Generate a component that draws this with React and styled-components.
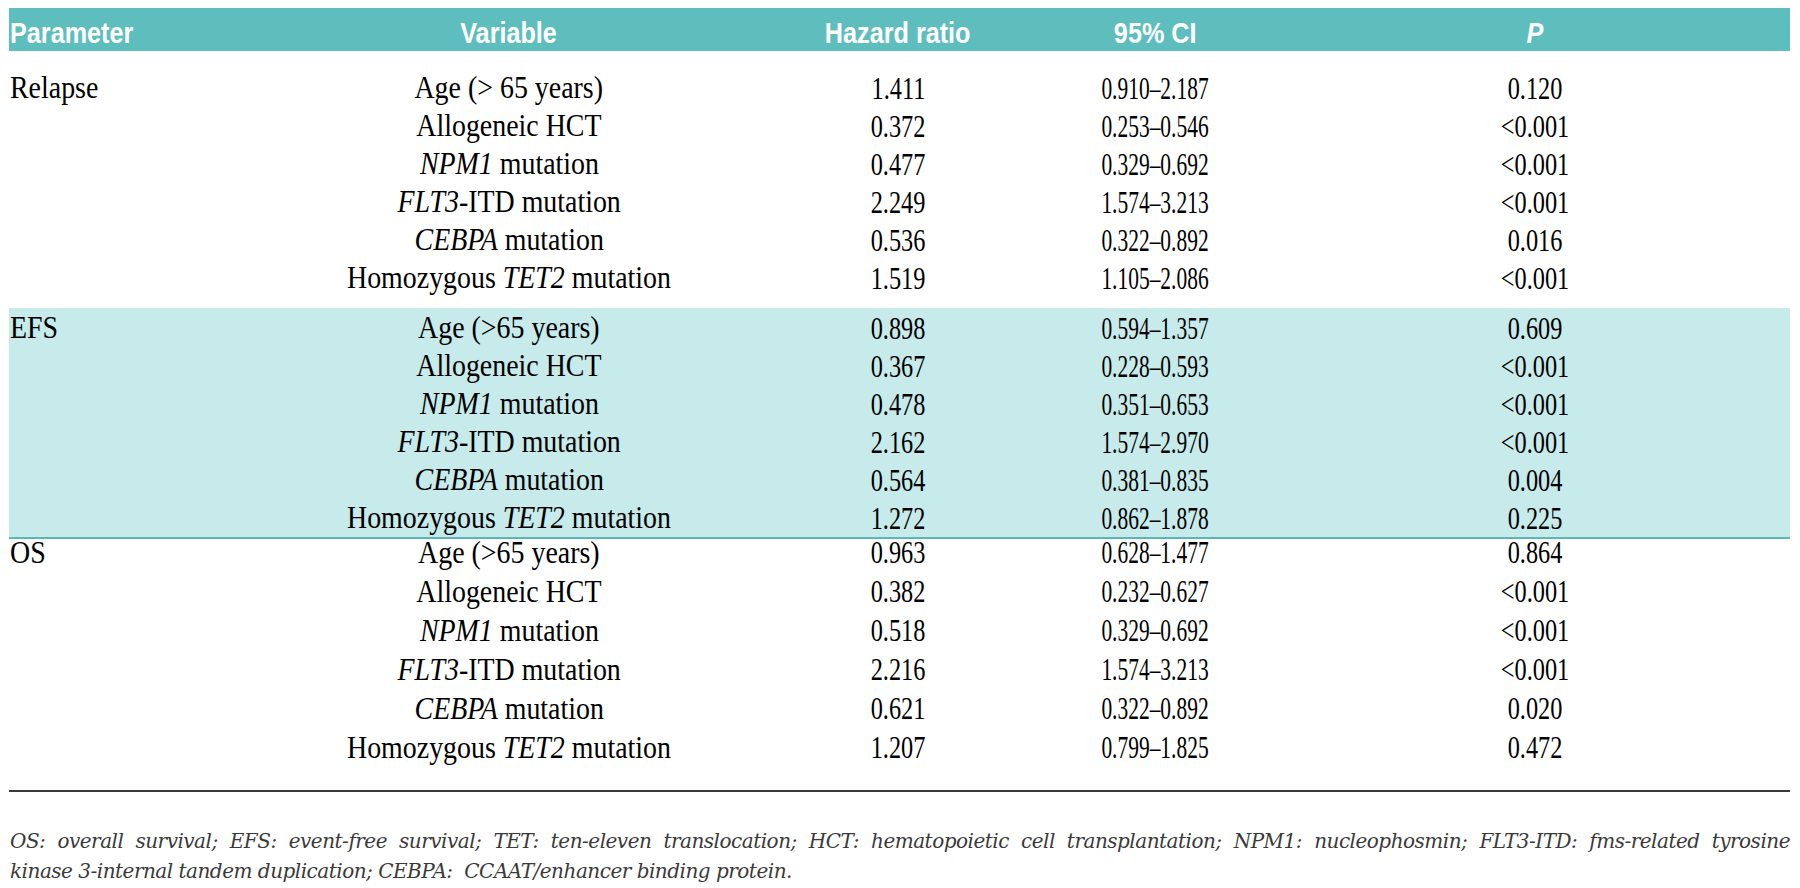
import styled, { createGlobalStyle } from "styled-components";

const GlobalStyle = createGlobalStyle`
  body {
    margin: 0;
    background: #ffffff;
  }
`;

const cols = "243px 514px 264px 250px 510px";

const Page = styled.div`
  width: 1781px;
  padding: 8px 0 0 9px;
`;

const HeaderRow = styled.div`
  display: grid;
  grid-template-columns: ${cols};
  align-items: center;
  height: 43px;
  background: #5ebebe;
  color: #ffffff;
  font-family: "Liberation Sans", Arial, sans-serif;
  font-weight: 700;
  font-size: 30px;
  line-height: 43px;
  white-space: nowrap;
`;

const HeadCell = styled.div`
  text-align: ${(p) => (p.$left ? "left" : "center")};
  padding-left: ${(p) => (p.$left ? "1px" : "0")};
  padding-top: 3px;
`;

const HeadLabel = styled.span`
  display: inline-block;
  transform: scaleX(0.84);
  transform-origin: ${(p) => (p.$left ? "left" : "center")} center;
  font-style: ${(p) => (p.$italic ? "italic" : "normal")};
`;

const Group = styled.div`
  background: ${(p) => (p.$band ? "#c7eaea" : "transparent")};
  padding: ${(p) => p.$pad};
  margin-top: ${(p) => p.$pull || "0"};
  border-bottom: ${(p) => (p.$line ? "2px solid #5ab7b7" : "none")};
`;

const Row = styled.div`
  display: grid;
  grid-template-columns: ${cols};
  height: ${(p) => p.$h}px;
  line-height: ${(p) => p.$h}px;
  font-family: "Liberation Serif", "Times New Roman", serif;
  color: #000000;
  white-space: nowrap;
`;

const Cell = styled.div`
  text-align: ${(p) => (p.$left ? "left" : "center")};
  padding-left: ${(p) => (p.$left ? "1px" : "0")};
`;

const Label = styled.span`
  display: inline-block;
  font-size: 31px;
  transform: scaleX(0.9);
  transform-origin: ${(p) => (p.$left ? "left" : "center")} center;
`;

const Num = styled.span`
  display: inline-block;
  font-size: 32px;
  transform: scaleX(${(p) => p.$squeeze || 0.76});
  transform-origin: center center;
`;

const Rule = styled.div`
  margin-top: 23px;
  height: 2px;
  background: #3a3a3a;
`;

const Footnote = styled.div`
  margin-top: 34px;
  padding-left: 1px;
  font-family: "DejaVu Serif", "Liberation Serif", serif;
  font-style: italic;
  font-size: 20px;
  letter-spacing: -0.5px;
  line-height: 30px;
  color: #3a3a3a;
`;

const FootLine = styled.div`
  text-align: ${(p) => (p.$justify ? "justify" : "left")};
  text-align-last: ${(p) => (p.$justify ? "justify" : "left")};
  white-space: ${(p) => (p.$justify ? "normal" : "pre")};
`;

const variables = [
  ["Age", null, " (>65 years)"],
  ["Allogeneic HCT", null, ""],
  ["", "NPM1", " mutation"],
  ["", "FLT3", "-ITD mutation"],
  ["", "CEBPA", " mutation"],
  ["Homozygous ", "TET2", " mutation"],
];

const groups = [
  {
    name: "Relapse",
    first: "Age (> 65 years)",
    rows: [
      ["1.411", "0.910–2.187", "0.120"],
      ["0.372", "0.253–0.546", "<0.001"],
      ["0.477", "0.329–0.692", "<0.001"],
      ["2.249", "1.574–3.213", "<0.001"],
      ["0.536", "0.322–0.892", "0.016"],
      ["1.519", "1.105–2.086", "<0.001"],
    ],
    h: 38,
    pad: "18px 0 11px 0",
  },
  {
    name: "EFS",
    band: true,
    line: true,
    rows: [
      ["0.898", "0.594–1.357", "0.609"],
      ["0.367", "0.228–0.593", "<0.001"],
      ["0.478", "0.351–0.653", "<0.001"],
      ["2.162", "1.574–2.970", "<0.001"],
      ["0.564", "0.381–0.835", "0.004"],
      ["1.272", "0.862–1.878", "0.225"],
    ],
    h: 38,
    pad: "1px 0 0 0",
  },
  {
    name: "OS",
    pull: "-6px",
    rows: [
      ["0.963", "0.628–1.477", "0.864"],
      ["0.382", "0.232–0.627", "<0.001"],
      ["0.518", "0.329–0.692", "<0.001"],
      ["2.216", "1.574–3.213", "<0.001"],
      ["0.621", "0.322–0.892", "0.020"],
      ["1.207", "0.799–1.825", "0.472"],
    ],
    h: 39,
    pad: "0",
  },
];

function VariableText({ index, first }) {
  if (index === 0 && first) return <Label>{first}</Label>;
  const [pre, it, post] = variables[index];
  return (
    <Label>
      {pre}
      {it && <i>{it}</i>}
      {post}
    </Label>
  );
}

function App() {
  return (
    <Page>
      <GlobalStyle />
      <HeaderRow>
        <HeadCell $left>
          <HeadLabel $left>Parameter</HeadLabel>
        </HeadCell>
        <HeadCell>
          <HeadLabel>Variable</HeadLabel>
        </HeadCell>
        <HeadCell>
          <HeadLabel>Hazard ratio</HeadLabel>
        </HeadCell>
        <HeadCell>
          <HeadLabel>95% CI</HeadLabel>
        </HeadCell>
        <HeadCell>
          <HeadLabel $italic>P</HeadLabel>
        </HeadCell>
      </HeaderRow>

      {groups.map((g) => (
        <Group key={g.name} $band={g.band} $line={g.line} $pad={g.pad} $pull={g.pull}>
          {g.rows.map((r, i) => (
            <Row key={i} $h={g.h}>
              <Cell $left>{i === 0 && <Label $left>{g.name}</Label>}</Cell>
              <Cell>
                <VariableText index={i} first={g.first} />
              </Cell>
              <Cell>
                <Num>{r[0]}</Num>
              </Cell>
              <Cell>
                <Num $squeeze={0.67}>{r[1]}</Num>
              </Cell>
              <Cell>
                <Num>{r[2]}</Num>
              </Cell>
            </Row>
          ))}
        </Group>
      ))}

      <Rule />

      <Footnote>
        <FootLine $justify>
          OS: overall survival; EFS: event-free survival; TET: ten-eleven translocation; HCT: hematopoietic cell
          transplantation; NPM1: nucleophosmin; FLT3-ITD: fms-related tyrosine
        </FootLine>
        <FootLine>{"kinase 3-internal tandem duplication; CEBPA:  CCAAT/enhancer binding protein."}</FootLine>
      </Footnote>
    </Page>
  );
}

export default App;
